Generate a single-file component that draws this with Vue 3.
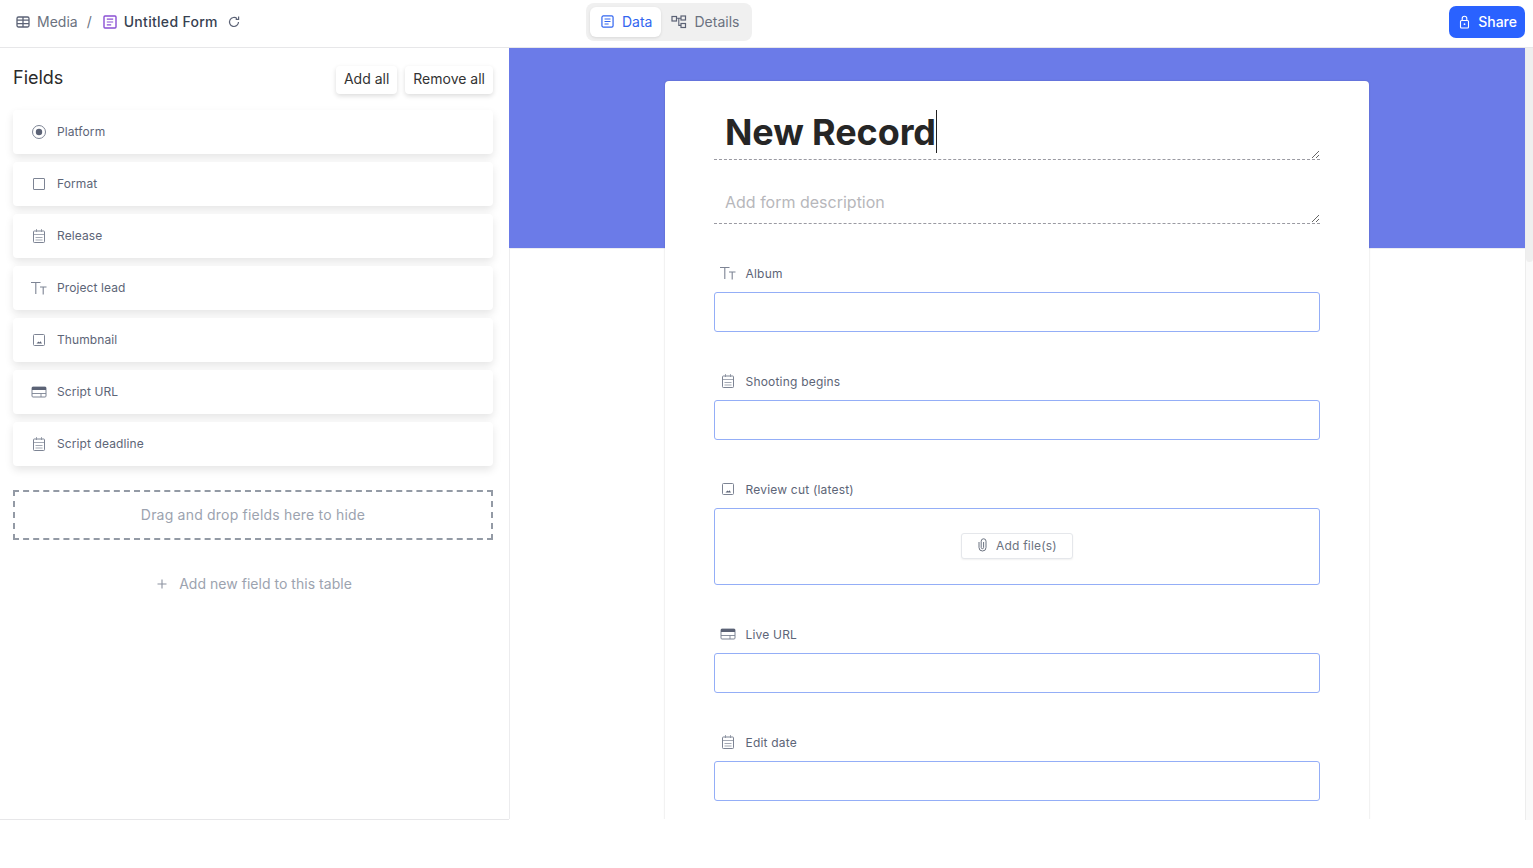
<template>
  <div class="app">
    <!-- TOP BAR -->
    <header class="topbar">
      <div class="crumbs">
        <svg class="icon-table" width="14" height="14" viewBox="0 0 14 14" fill="none">
          <rect x="1" y="2" width="12" height="10" rx="1.5" stroke="#5b6275" stroke-width="1.3" />
          <path d="M1 5.2h12M1 8.6h12M7 2v10" stroke="#5b6275" stroke-width="1.3" />
        </svg>
        <span class="crumb-base">Media</span>
        <span class="crumb-sep">/</span>
        <svg class="icon-form" width="14" height="14" viewBox="0 0 14 14" fill="none">
          <rect x="1" y="1" width="12" height="12" rx="1" stroke="#8a4fd3" stroke-width="1.4" />
          <path d="M3.8 4.2h6.4M3.8 7h6.4M3.8 9.8h4.4" stroke="#8a4fd3" stroke-width="1.2" />
        </svg>
        <span class="crumb-title">Untitled Form</span>
        <svg class="icon-reload" width="14" height="14" viewBox="0 0 14 14" fill="none">
          <path d="M11.5 7a4.5 4.5 0 1 1-1.4-3.3" stroke="#5b6275" stroke-width="1.2" />
          <path d="M11.6 1.6v2.9H8.7" stroke="#5b6275" stroke-width="1.2" />
        </svg>
      </div>

      <div class="tabs">
        <div class="tab active">
          <svg width="13" height="13" viewBox="0 0 14 14" fill="none">
            <rect x="1" y="1" width="12" height="12" rx="1.5" stroke="#3266f0" stroke-width="1.3" />
            <path d="M3.8 4.2h6.4M3.8 7h6.4M3.8 9.8h4.4" stroke="#3266f0" stroke-width="1.1" />
          </svg>
          <span>Data</span>
        </div>
        <div class="tab">
          <svg width="16" height="14" viewBox="0 0 16 14" fill="none">
            <rect x="1" y="1.5" width="4.5" height="4.5" stroke="#5b6275" stroke-width="1.2" />
            <rect x="10" y="1" width="4.5" height="4" stroke="#5b6275" stroke-width="1.2" />
            <rect x="10" y="8.5" width="4.5" height="4" stroke="#5b6275" stroke-width="1.2" />
            <path d="M5.5 3.2H10M7.8 3.2v7.2H10" stroke="#5b6275" stroke-width="1.1" />
          </svg>
          <span>Details</span>
        </div>
      </div>

      <button class="share">
        <svg width="13" height="14" viewBox="0 0 13 14" fill="none">
          <rect x="2.5" y="5.5" width="8" height="7.5" rx="1" stroke="#fff" stroke-width="1.1" />
          <path d="M4.2 5.5V3.6a2.3 2.3 0 0 1 4.6 0v1.9" stroke="#fff" stroke-width="1.1" />
          <circle cx="6.5" cy="9.2" r="0.9" fill="#fff" />
        </svg>
        <span>Share</span>
      </button>
    </header>

    <main class="main">
      <!-- FIELDS PANEL -->
      <aside class="fields-panel">
        <div class="fields-head">
          <h2 class="fields-title">Fields</h2>
          <div class="fields-actions">
            <button class="mini-btn">Add all</button>
            <button class="mini-btn">Remove all</button>
          </div>
        </div>

        <div class="field-list">
          <div v-for="f in hiddenFields" :key="f.name" class="field-item">
            <span class="field-icon"><FieldIcon :type="f.type" /></span>
            <span class="field-name">{{ f.name }}</span>
          </div>
        </div>

        <div class="drop-zone">Drag and drop fields here to hide</div>

        <div class="add-field">
          <svg width="12" height="12" viewBox="0 0 12 12" fill="none">
            <path d="M6 1.5v9M1.5 6h9" stroke="#8b92a0" stroke-width="1.1" />
          </svg>
          <span>Add new field to this table</span>
        </div>
      </aside>

      <!-- FORM -->
      <section class="form-pane">
        <div class="form-card">
          <div class="title-wrap">
            <textarea class="title-input" rows="1" value="New Record"></textarea>
            <span class="caret"></span>
          </div>
          <textarea class="desc-input" rows="1" placeholder="Add form description"></textarea>

          <div class="form-fields">
            <div v-for="f in formFields" :key="f.name" class="form-field">
              <label class="form-label">
                <span class="label-icon"><FieldIcon :type="f.type" /></span>
                <span>{{ f.name }}</span>
              </label>
              <div v-if="f.type === 'image'" class="input-box attach">
                <button class="attach-btn">
                  <svg width="11" height="14" viewBox="0 0 11 14" fill="none">
                    <path d="M2 4v5.5a3.5 3.5 0 0 0 7 0V3.2a2.4 2.4 0 0 0-4.8 0v6.3a1.2 1.2 0 0 0 2.4 0V4" stroke="#6b7280" stroke-width="1" />
                  </svg>
                  <span>Add file(s)</span>
                </button>
              </div>
              <div v-else class="input-box"></div>
            </div>
          </div>
        </div>
      </section>

      <div class="scroll-track"><div class="scroll-thumb"></div></div>
    </main>
  </div>
</template>

<script setup>
import { h } from 'vue';

const hiddenFields = [
  { name: 'Platform', type: 'radio' },
  { name: 'Format', type: 'check' },
  { name: 'Release', type: 'date' },
  { name: 'Project lead', type: 'text' },
  { name: 'Thumbnail', type: 'image' },
  { name: 'Script URL', type: 'url' },
  { name: 'Script deadline', type: 'date' },
];

const formFields = [
  { name: 'Album', type: 'text' },
  { name: 'Shooting begins', type: 'date' },
  { name: 'Review cut (latest)', type: 'image' },
  { name: 'Live URL', type: 'url' },
  { name: 'Edit date', type: 'date' },
];

const stroke = '#7d8494';
const s = (tag, props) => h(tag, { stroke, fill: 'none', 'stroke-width': 1, ...props });

// small field-type glyphs, all on a 16x16 box
const shapes = {
  radio: () => [
    s('circle', { cx: 8, cy: 8, r: 6.5 }),
    h('circle', { cx: 8, cy: 8, r: 3.2, fill: '#5b6275' }),
  ],
  check: () => [s('rect', { x: 2.5, y: 2.5, width: 11, height: 11, rx: 0.4 })],
  date: () => [
    s('rect', { x: 2.5, y: 3, width: 11, height: 11.5, rx: 0.8 }),
    s('path', { d: 'M2.5 6.5h11M5.5 1v3M10.5 1v3M4.5 9.5h7M4.5 12h7', 'stroke-width': 0.7 }),
  ],
  text: () => [
    s('path', { d: 'M0 2.5h9.5M4.8 2.5V14M9 7h6.5M12.2 7v7.5', 'stroke-width': 1.1 }),
  ],
  image: () => [
    s('rect', { x: 2.5, y: 2.5, width: 11, height: 11, rx: 1 }),
    h('path', { d: 'M5.5 11.5l2-2 1 1 1-1.2 1.5 2.2z', fill: '#5b6275' }),
  ],
  url: () => [
    s('rect', { x: 1, y: 3, width: 14, height: 10, rx: 1 }),
    h('rect', { x: 1, y: 3, width: 14, height: 3, fill: '#5b6275' }),
    s('path', { d: 'M1 9.5h14M10 9.5V13', 'stroke-width': 0.9 }),
  ],
};

const FieldIcon = (props) =>
  h('svg', { width: 16, height: 16, viewBox: '0 0 16 16', style: 'display:block' }, shapes[props.type]());
FieldIcon.props = ['type'];
</script>

<style scoped>
.app {
  height: 820px;
  display: flex;
  flex-direction: column;
  font-family: Inter, "Noto Sans", sans-serif;
  color: #374151;
  overflow: hidden;
}

/* TOP BAR */
.topbar {
  height: 48px;
  box-sizing: border-box;
  flex: none;
  border-bottom: 1px solid #e7e7e9;
  display: flex;
  align-items: center;
  padding: 0 8px 0 16px;
}

.crumbs {
  width: 570px;
  flex: none;
  display: flex;
  align-items: center;
  font-size: 14px;
  margin-top: -4px;
}

.crumb-base {
  margin-left: 7px;
  color: #6b7280;
}

.crumb-sep {
  margin: 0 11px 0 9px;
  color: #6b7280;
}

.crumb-title {
  margin-left: 7px;
  font-weight: 500;
  letter-spacing: 0.3px;
  color: #374151;
}

.icon-reload {
  margin-left: 9px;
}

.tabs {
  display: flex;
  gap: 2px;
  width: 166px;
  height: 38px;
  box-sizing: border-box;
  padding: 4px;
  margin-top: -3px;
  background: #f0f0f0;
  border-radius: 8px;
}

.tab {
  display: flex;
  align-items: center;
  gap: 7px;
  padding: 0 8px 1px;
  font-size: 14px;
  color: #6b7280;
  border-radius: 6px;
}

.tab.active {
  background: #fff;
  color: #3266f0;
  gap: 8px;
  padding: 0 9px 1px 11px;
  box-shadow: 0 1px 3px rgba(0, 0, 0, 0.1);
}

.share {
  margin-left: auto;
  display: flex;
  align-items: center;
  gap: 7px;
  height: 32px;
  margin-top: -3px;
  padding: 0 8px 1px 9px;
  border: none;
  border-radius: 7px;
  background: #2a62ff;
  color: #fff;
  font: 500 14px Inter, sans-serif;
}

.main {
  flex: 1;
  min-height: 0;
  display: flex;
}

/* FIELDS PANEL */
.fields-panel {
  width: 509px;
  flex: none;
  box-sizing: border-box;
  padding: 18px 16px 0 13px;
  border-bottom: 1px solid #e7e7e9;
}

.fields-head {
  display: flex;
  justify-content: space-between;
  align-items: flex-start;
  height: 44px;
}

.fields-title {
  margin: 0;
  font-size: 18px;
  font-weight: 400;
  line-height: 24px;
  color: #2b2b2b;
}

.fields-actions {
  display: flex;
  gap: 8px;
}

.mini-btn {
  height: 28px;
  padding: 0 8px 3px;
  border: none;
  border-radius: 4px;
  background: #fff;
  color: #333;
  font: 400 14px Inter, sans-serif;
  box-shadow: 0 2px 5px rgba(0, 0, 0, 0.14);
}

.field-list {
  display: flex;
  flex-direction: column;
  gap: 8px;
}

.field-item {
  height: 44px;
  display: flex;
  align-items: center;
  gap: 10px;
  padding-left: 18px;
  border-radius: 4px;
  background: #fff;
  font-size: 12px;
  letter-spacing: 0.1px;
  color: #5d6577;
  box-shadow: 0 4px 8px rgba(0, 0, 0, 0.1);
}

.field-name {
  margin-top: -2px;
}

.field-icon,
.label-icon {
  width: 16px;
  height: 16px;
  flex: none;
}

.drop-zone {
  margin-top: 24px;
  height: 50px;
  box-sizing: border-box;
  display: flex;
  align-items: center;
  justify-content: center;
  padding-bottom: 2px;
  border: 2px dashed #939aa5;
  font-size: 14px;
  color: #9ca3af;
  letter-spacing: 0.2px;
}

.add-field {
  margin-top: 35px;
  padding-left: 2px;
  display: flex;
  align-items: center;
  justify-content: center;
  gap: 11px;
  font-size: 14px;
  color: #9ca3af;
  letter-spacing: 0.03px;
}

/* FORM */
.form-pane {
  flex: 1;
  min-width: 0;
  overflow: hidden;
  padding-top: 33px;
  margin-bottom: 1px;
  background:
    linear-gradient(#6b7be8 200px, #ececf2 200px, #ececf2 201px, transparent 201px),
    linear-gradient(90deg, #ececee 1px, #fff 1px);
}

.form-card {
  width: 704px;
  margin: 0 auto;
  box-sizing: border-box;
  padding: 16px 49px 60px;
  background: #fff;
  border-radius: 4px 4px 0 0;
  box-shadow: 0 0 2px rgba(0, 0, 0, 0.2);
}

.title-wrap {
  position: relative;
}

.title-input,
.desc-input {
  display: block;
  width: 100%;
  box-sizing: border-box;
  border: none;
  border-bottom: 1px dashed #9a9aa2;
  outline: none;
  padding: 0 11px;
  font-family: Inter, sans-serif;
  background: transparent;
  resize: vertical;
}

.title-input {
  height: 63px;
  padding-top: 12px;
  font-size: 36px;
  font-weight: 700;
  line-height: 46px;
  letter-spacing: -0.1px;
  color: #262626;
  overflow: hidden;
}

.caret {
  position: absolute;
  left: 222px;
  top: 13px;
  width: 1px;
  height: 43px;
  background: #222;
}

.desc-input {
  margin-top: 32px;
  height: 32px;
  font-size: 16px;
  line-height: 20px;
  color: #333;
  overflow: hidden;
}

.desc-input::placeholder {
  color: #b7b7bb;
  opacity: 1;
}

.form-fields {
  margin-top: 39px;
  display: flex;
  flex-direction: column;
  gap: 39px;
}

.form-label {
  display: flex;
  align-items: center;
  gap: 9.5px;
  height: 20px;
  margin-bottom: 9px;
  padding-left: 6px;
  font-size: 12px;
  letter-spacing: 0.2px;
  color: #5d6577;
}

.input-box {
  height: 40px;
  box-sizing: border-box;
  border: 1px solid #94aef7;
  border-radius: 3px;
}

.input-box.attach {
  height: 77px;
  display: flex;
  align-items: center;
  justify-content: center;
  padding-bottom: 2px;
}

.attach-btn {
  display: flex;
  align-items: center;
  gap: 8px;
  height: 26px;
  width: 112px;
  box-sizing: border-box;
  justify-content: center;
  padding: 0 0 1px;
  border: 1px solid #e5e7eb;
  border-radius: 3px;
  background: #fff;
  font: 400 12px Inter, sans-serif;
  letter-spacing: 0.2px;
  color: #6b7280;
  box-shadow: 0 1px 2px rgba(0, 0, 0, 0.06);
}

/* SCROLLBAR */
.scroll-track {
  width: 8px;
  flex: none;
  background: #fafafa;
  border-left: 1px solid #ededed;
  box-sizing: border-box;
}

.scroll-thumb {
  height: 214px;
  background: #efefef;
  border-radius: 0 0 4px 4px;
}
</style>
